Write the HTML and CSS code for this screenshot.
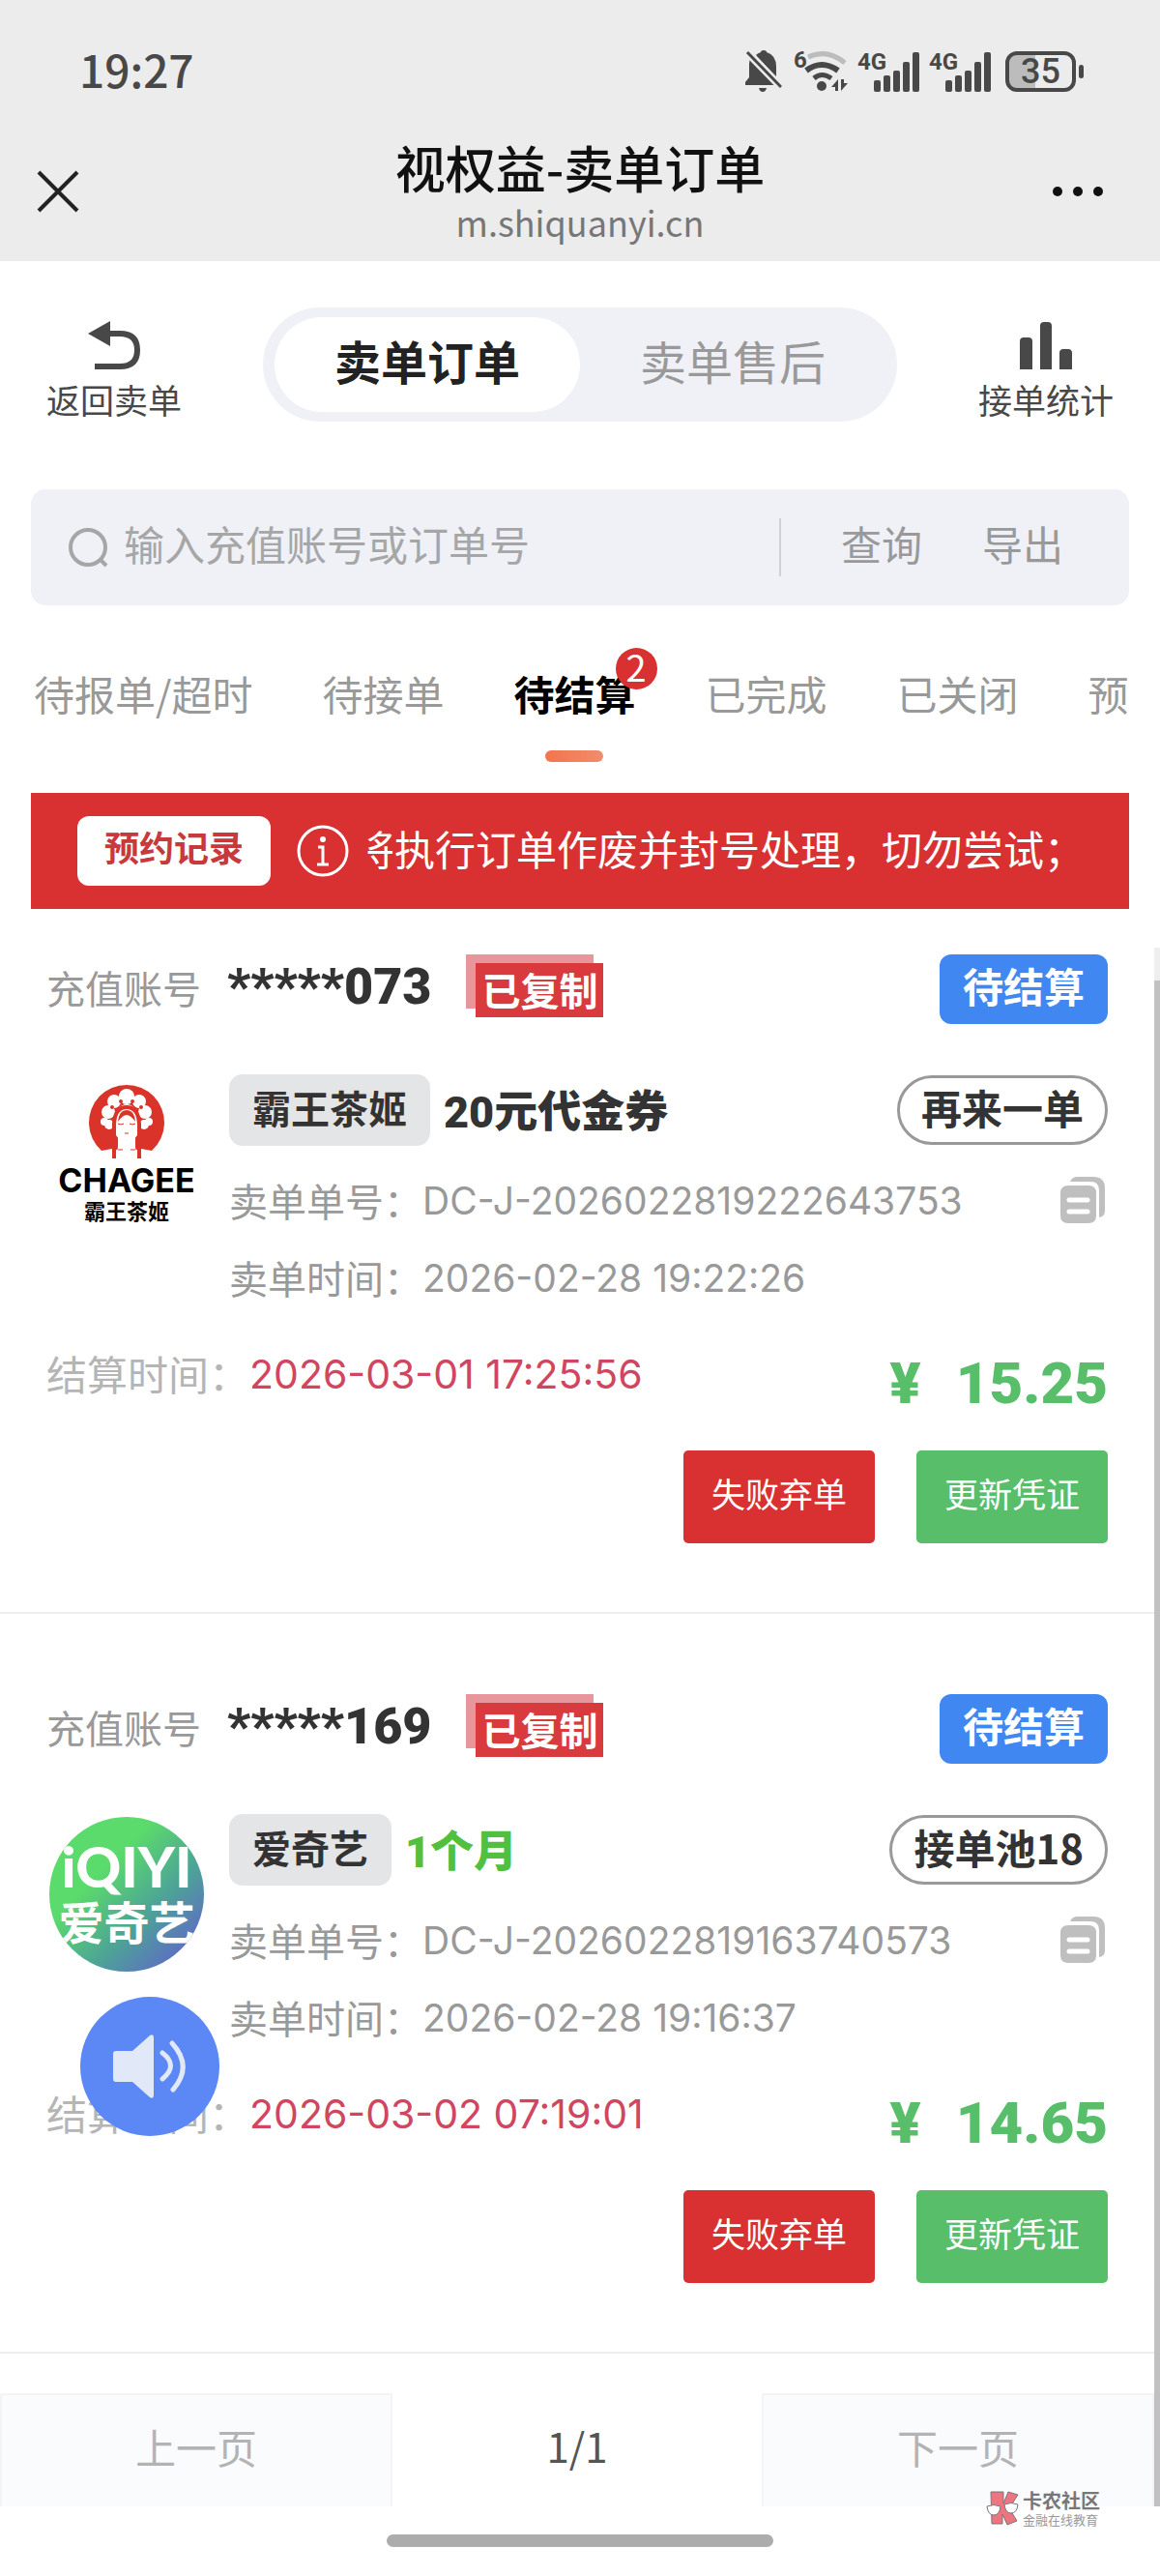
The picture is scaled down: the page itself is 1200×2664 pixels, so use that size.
FILE: index.html
```html
<!DOCTYPE html>
<html lang="zh-CN">

<head>
  <meta charset="UTF-8" />
  <meta name="viewport" content="width=device-width, initial-scale=1.0" />
  <title>视权益-卖单订单</title>
  <link rel="stylesheet" href="styles.css">
</head>

<body>
  <!-- 公用图标 -->
  <svg width="0" height="0" class="symbols" aria-hidden="true">
    <symbol id="icon-signal" viewBox="0 0 62 42">
      <g fill="#484848">
        <rect x="15" y="30" width="7" height="12" rx="2" />
        <rect x="25" y="25" width="7" height="17" rx="2" />
        <rect x="35" y="20" width="7" height="22" rx="2" />
        <rect x="45" y="11" width="7" height="31" rx="2" />
        <rect x="55" y="1" width="7" height="41" rx="2" />
      </g>
    </symbol>
    <symbol id="icon-copy" viewBox="0 0 46 48">
      <path d="M10 5Q12 0 18 0h16q12 0 12 12v23q0 6-6 7V14q0-9-9-9z" fill="#bfbfbf" />
      <path d="M8 9h21q8 0 8 8v23q0 8-8 8H8q-8 0-8-8V17q0-8 8-8z" fill="#bfbfbf" />
      <path d="M9 24h19M9 36h19" stroke="#fff" stroke-width="5" stroke-linecap="round" />
    </symbol>
  </svg>

  <!-- 顶部 -->
  <header class="header">
    <div class="statusbar">
      <span class="clock">19:27</span>
      <div class="status-icons">
        <svg width="38" height="44" viewBox="0 0 38 44">
          <path d="M0 36v-3l4-5V14q0-4 2-7l27 29zM11 5q2-2 5-3 0-2 3-2t3 2q10 3 10 15v11z" fill="#484848" />
          <path d="M14 39h8q-1 4-4 4t-4-4z" fill="#484848" />
          <path d="M2 2l35 36" stroke="#ececec" stroke-width="8" />
          <path d="M2 2l35 36" stroke="#484848" stroke-width="3" />
        </svg>
        <svg class="wifi" width="56" height="46" viewBox="0 0 56 46">
          <text x="0" y="19" class="net-label">6</text>
          <path d="M15 8q20-9 38 6" fill="none" stroke="#bcbcbc" stroke-width="5" />
          <path d="M13 22q16-12 33 0" fill="none" stroke="#484848" stroke-width="6" />
          <path d="M21 30q8-7 18 0" fill="none" stroke="#484848" stroke-width="5" />
          <circle cx="29" cy="38" r="5" fill="#484848" />
          <path d="M46 31v12h-3v-4h-4zM49 43V31h3v4h4z" fill="#484848" />
        </svg>
        <div class="signal">
          <span class="net-label">4G</span>
          <svg width="62" height="42"><use href="#icon-signal" /></svg>
        </div>
        <div class="signal">
          <span class="net-label">4G</span>
          <svg width="62" height="42"><use href="#icon-signal" /></svg>
        </div>
        <div class="battery">35</div>
      </div>
    </div>
    <div class="titlebar">
      <button class="icon-btn" aria-label="关闭">
        <svg width="44" height="44" viewBox="0 0 44 44">
          <path d="M2 2l40 40M42 2L2 42" stroke="#222" stroke-width="4" />
        </svg>
      </button>
      <div class="titles">
        <h1>视权益-卖单订单</h1>
        <p>m.shiquanyi.cn</p>
      </div>
      <button class="icon-btn more" aria-label="更多">
        <svg width="54" height="12" viewBox="0 0 54 12" fill="#111">
          <circle cx="6" cy="6" r="5" />
          <circle cx="27" cy="6" r="5" />
          <circle cx="48" cy="6" r="5" />
        </svg>
      </button>
    </div>
  </header>

  <main>
    <!-- 导航 -->
    <nav class="nav">
      <a class="nav-item" href="#">
        <svg width="54" height="50" viewBox="0 0 54 50">
          <path d="M0 13L23 0v26z" fill="#484848" />
          <path d="M20 13h13q18 0 18 17t-18 17H7" fill="none" stroke="#484848" stroke-width="6" />
        </svg>
        <span>返回卖单</span>
      </a>
      <div class="switch">
        <button class="switch-btn active">卖单订单</button>
        <button class="switch-btn">卖单售后</button>
      </div>
      <a class="nav-item" href="#">
        <svg width="54" height="50" viewBox="0 0 54 50" fill="#484848">
          <path d="M0 50V21q0-4 4-4h5q4 0 4 4v29zM21 50V5q0-4 4-4h4q4 0 4 4v45zM41 50V33q0-4 4-4h5q4 0 4 4v17z" />
        </svg>
        <span>接单统计</span>
      </a>
    </nav>

    <!-- 搜索 -->
    <form class="search">
      <svg width="42" height="42" viewBox="0 0 42 42" fill="none" stroke="#a6a6a6" stroke-width="4">
        <circle cx="21" cy="21" r="18" />
        <path d="M33 33l7 7" stroke-width="4" />
      </svg>
      <input type="text" placeholder="输入充值账号或订单号" aria-label="输入充值账号或订单号" />
      <button type="button">查询</button>
      <button type="button">导出</button>
    </form>

    <!-- 状态选项卡 -->
    <div class="tabs">
      <button class="tab">待报单/超时</button>
      <button class="tab">待接单</button>
      <button class="tab active">待结算<span class="badge">2</span></button>
      <button class="tab">已完成</button>
      <button class="tab">已关闭</button>
      <button class="tab">预</button>
    </div>

    <!-- 公告 -->
    <div class="notice">
      <button class="record">预约记录</button>
      <svg width="54" height="54" viewBox="0 0 54 54" fill="none" stroke="#fff" stroke-width="3">
        <circle cx="27" cy="27" r="25" />
        <path d="M22 23h5v18M21 41h12" />
        <circle cx="27" cy="15" r="2" fill="#fff" stroke-width="2" />
      </svg>
      <div class="marquee"><span>将执行订单作废并封号处理，切勿尝试；</span></div>
    </div>

    <!-- 订单列表 -->
    <div class="scroll">
      <div class="list">
        <article class="order">
          <div class="order-head">
            <span class="label">充值账号</span>
            <strong class="account">*****073</strong>
            <span class="stamp"><span>已复制</span></span>
            <span class="state">待结算</span>
          </div>
          <div class="order-body">
            <svg class="logo" width="160" height="160" viewBox="0 0 160 160">
              <path d="M54 76A39 39 0 1 1 106 76L95 74V85H91L89 72V50H71V72L69 85H65V74z" fill="#d9332a" />
              <g fill="#fff">
                <path d="M69 48q0-20 11-20t11 20v12l-6 8v6l17 3v9H58v-9l17-3v-6l-6-8z" />
                <circle cx="80" cy="20" r="8" />
                <circle cx="67" cy="25" r="7" />
                <circle cx="93" cy="25" r="7" />
                <circle cx="61" cy="36" r="7" />
                <circle cx="99" cy="36" r="7" />
                <circle cx="57" cy="46" r="4" />
                <circle cx="103" cy="46" r="4" />
                <circle cx="62" cy="49" r="5" />
                <circle cx="98" cy="49" r="5" />
              </g>
              <path d="M67 84V48q1-17 13-17t13 17v36" fill="none" stroke="#d9332a" stroke-width="4" />
              <path d="M71 46q1-12 9-12t9 12q-5-7-9-7t-9 7z" fill="#d9332a" />
              <g fill="#d9332a">
                <circle cx="65" cy="31" r="2" />
                <circle cx="74" cy="25" r="2" />
                <circle cx="86" cy="25" r="2" />
                <circle cx="95" cy="31" r="2" />
              </g>
              <path d="M71 48q3 2 6 0M83 48q3 2 6 0M78 58h4M71 75h5M84 75h5" fill="none" stroke="#d9332a" stroke-width="1" />
              <text x="80" y="119" class="chagee-en">CHAGEE</text>
              <text x="80" y="147" class="chagee-cn">霸王茶姬</text>
            </svg>
            <div class="detail">
              <div class="goods">
                <span class="brand">霸王茶姬</span>
                <strong class="product">20元代金券</strong>
                <button class="again">再来一单</button>
              </div>
              <div class="line">
                <span>卖单单号：</span>
                <span class="num">DC-J-2026022819222643753</span>
                <button class="copy" aria-label="复制"><svg width="46" height="48"><use href="#icon-copy" /></svg></button>
              </div>
              <div class="line">
                <span>卖单时间：</span>
                <span class="num">2026-02-28 19:22:26</span>
              </div>
            </div>
          </div>
          <div class="settle">
            <span class="settle-label">结算时间：</span>
            <span class="settle-time">2026-03-01 17:25:56</span>
            <strong class="price"><span>¥</span>15.25</strong>
          </div>
          <div class="actions">
            <button class="btn btn-red">失败弃单</button>
            <button class="btn btn-green">更新凭证</button>
          </div>
        </article>

        <article class="order">
          <div class="order-head">
            <span class="label">充值账号</span>
            <strong class="account">*****169</strong>
            <span class="stamp"><span>已复制</span></span>
            <span class="state">待结算</span>
          </div>
          <div class="order-body">
            <svg class="logo" width="160" height="160" viewBox="0 0 160 160">
              <defs>
                <linearGradient id="iqiyi" x1="0.1" y1="0.1" x2="0.9" y2="0.9">
                  <stop offset="0.3" stop-color="#5bdb6b" />
                  <stop offset="0.65" stop-color="#4da595" />
                  <stop offset="1" stop-color="#5f68c8" />
                </linearGradient>
                <clipPath id="round"><circle cx="80" cy="80" r="80" /></clipPath>
              </defs>
              <g clip-path="url(#round)">
                <rect width="160" height="160" fill="url(#iqiyi)" />
                <text x="80" y="73" class="iqiyi-en">iQIYI</text>
                <text x="80" y="127" class="iqiyi-cn">爱奇艺</text>
              </g>
            </svg>
            <div class="detail">
              <div class="goods">
                <span class="brand">爱奇艺</span>
                <strong class="product green">1个月</strong>
                <button class="again">接单池18</button>
              </div>
              <div class="line">
                <span>卖单单号：</span>
                <span class="num">DC-J-2026022819163740573</span>
                <button class="copy" aria-label="复制"><svg width="46" height="48"><use href="#icon-copy" /></svg></button>
              </div>
              <div class="line">
                <span>卖单时间：</span>
                <span class="num">2026-02-28 19:16:37</span>
              </div>
            </div>
          </div>
          <div class="settle">
            <span class="settle-label">结算时间：</span>
            <span class="settle-time">2026-03-02 07:19:01</span>
            <strong class="price"><span>¥</span>14.65</strong>
          </div>
          <div class="actions">
            <button class="btn btn-red">失败弃单</button>
            <button class="btn btn-green">更新凭证</button>
          </div>
        </article>

        <div class="pager">
          <button disabled>上一页</button>
          <span>1/1</span>
          <button disabled>下一页</button>
        </div>
      </div>
      <div class="scrollbar"></div>
    </div>
  </main>

  <footer class="home"><div class="home-bar"></div></footer>

  <!-- 语音播报 -->
  <button class="voice" aria-label="语音播报">
    <svg width="76" height="66" viewBox="0 0 76 66">
      <path d="M3 17h17L38 1q4-2 4 2v60q0 4-4 2L20 49H3q-3 0-3-3V20q0-3 3-3z" fill="#e1e8f8" />
      <path d="M51 19q17 13 0 27M61 9q22 24 1 48" fill="none" stroke="#e1e8f8" stroke-width="5" stroke-linecap="round" />
    </svg>
  </button>

  <!-- 水印 -->
  <div class="watermark">
    <svg width="34" height="36" viewBox="0 0 34 36">
      <path d="M5 1h13v12l5-12 10 3-9 14 8 13-10 4-5-11v10H6z" fill="#ee7480" stroke="#777" />
      <path d="M1 16q7-3 14 0-1 9-7 9t-7-9zM19 14q7-3 14 0-1 9-7 9t-7-9z" fill="#fff" stroke="#777" />
    </svg>
    <div>
      <p class="wm-name">卡农社区</p>
      <p class="wm-sub">金融在线教育</p>
    </div>
  </div>
</body>

</html>
```
FILE: styles.css
```css
* {
  margin: 0;
  padding: 0;
  box-sizing: border-box;
}

body {
  position: relative;
  background: #fff;
  color: #333;
  font-family: "Noto Sans CJK SC", "Noto Sans", sans-serif;
  font-size: 42px;
}

button {
  padding-bottom: 10px;
  border: none;
  background: none;
  font: inherit;
  color: inherit;
  white-space: nowrap;
  cursor: pointer;
}

a {
  color: inherit;
  text-decoration: none;
}

svg {
  display: block;
  flex: none;
}

.symbols {
  position: absolute;
}

/* 顶部 */
.header {
  height: 270px;
  background: #ececec;
}

.statusbar {
  display: flex;
  justify-content: space-between;
  align-items: center;
  height: 148px;
  padding: 0 78px 0 82px;
}

.clock {
  padding-bottom: 6px;
  color: #484848;
  font-size: 46px;
  font-weight: 500;
}

.status-icons {
  display: flex;
  align-items: center;
  gap: 12px;
}

.net-label {
  color: #484848;
  fill: #484848;
  font-family: Roboto, sans-serif;
  font-size: 24px;
  font-weight: 700;
}

.signal {
  position: relative;
}

.signal .net-label {
  position: absolute;
  top: -4px;
  left: -2px;
  line-height: 30px;
}

.battery {
  position: relative;
  width: 73px;
  height: 42px;
  margin-left: 3px;
  margin-right: 9px;
  border: 4px solid #484848;
  border-radius: 12px;
  background: linear-gradient(90deg, #bcbcbc 42%, transparent 42%);
  color: #484848;
  font-family: Roboto, sans-serif;
  font-size: 36px;
  font-weight: 500;
  line-height: 34px;
  text-align: center;
}

.battery::after {
  content: "";
  position: absolute;
  top: 10px;
  right: -12px;
  width: 5px;
  height: 14px;
  border-radius: 3px;
  background: #484848;
}

.titlebar {
  display: flex;
  justify-content: space-between;
  padding: 0 58px 0 38px;
}

.icon-btn {
  display: flex;
  align-items: center;
  width: 74px;
  height: 100px;
  padding: 0;
}

.icon-btn.more {
  width: 54px;
}

.titles {
  text-align: center;
}

.titles h1 {
  color: #111;
  font-size: 52px;
  font-weight: 500;
  line-height: 50px;
}

.titles p {
  color: #777;
  font-size: 36px;
  line-height: 62px;
}

/* 导航 */
.nav {
  display: flex;
  justify-content: space-between;
  align-items: center;
  gap: 84px;
  padding: 48px 48px 0;
}

.nav-item {
  display: flex;
  flex-direction: column;
  align-items: center;
  gap: 8px;
  width: 140px;
  padding-top: 14px;
  color: #484848;
  font-size: 35px;
  line-height: 46px;
}

.switch {
  display: flex;
  flex: 1;
  height: 118px;
  padding: 10px 12px;
  border-radius: 59px;
  background: #f0f1f7;
}

.switch-btn {
  flex: 1;
  border-radius: 50px;
  color: #999;
  font-size: 48px;
}

.switch-btn.active {
  background: #fff;
  color: #222;
  font-weight: 700;
}

/* 搜索 */
.search {
  display: flex;
  align-items: center;
  height: 120px;
  margin: 70px 32px 0;
  padding: 0 68px 0 38px;
  border-radius: 15px;
  background: #f0f1f7;
}

.search input {
  flex: 1;
  min-width: 0;
  height: 60px;
  padding-left: 16px;
  padding-bottom: 10px;
  border: none;
  border-right: 2px solid #d0d1d6;
  outline: none;
  background: none;
  font: inherit;
}

.search input::placeholder {
  color: #a6a6a6;
}

.search button {
  margin-left: 62px;
  color: #999;
}

/* 状态选项卡 */
.tabs {
  display: flex;
  gap: 72px;
  height: 194px;
  margin: 0 32px;
  padding-left: 3px;
  overflow: hidden;
}

.tab {
  position: relative;
  flex: none;
  height: 162px;
  padding: 40px 0 22px;
  color: #999;
}

.tab.active {
  color: #000;
  font-weight: 700;
}

.tab.active::after {
  content: "";
  position: absolute;
  left: 50%;
  bottom: 0;
  width: 60px;
  height: 12px;
  margin-left: -30px;
  border-radius: 6px;
  background: linear-gradient(90deg, #f2754d, #f08c6c);
}

.badge {
  position: absolute;
  top: 44px;
  right: -22px;
  width: 43px;
  height: 43px;
  border-radius: 50%;
  background: #d93131;
  color: #fff;
  font-size: 38px;
  font-weight: 400;
  line-height: 38px;
}

/* 公告 */
.notice {
  display: flex;
  align-items: center;
  height: 120px;
  margin: 0 32px;
  padding: 0 46px 0 48px;
  background: #d93131;
  color: #fff;
}

.record {
  width: 200px;
  height: 72px;
  margin-right: 27px;
  border-radius: 12px;
  background: #fff;
  color: #c8393c;
  font-size: 36px;
  font-weight: 700;
}

.marquee {
  display: flex;
  flex: 1;
  justify-content: flex-end;
  margin-left: 19px;
  padding-bottom: 8px;
  overflow: hidden;
  white-space: nowrap;
}

/* 订单列表 */
.scroll {
  display: flex;
  margin-top: 40px;
}

.list {
  flex: 1;
}

.scrollbar {
  width: 6px;
  border-top: 34px solid #eee;
  background: #c1c1c1;
}

.order {
  padding: 83px 48px 71px;
  border-bottom: 2px solid #eee;
}

.order:first-child {
  padding-top: 7px;
}

.order-head {
  display: flex;
  align-items: center;
  height: 72px;
}

.label {
  width: 187px;
  padding-bottom: 4px;
  color: #999;
  font-size: 40px;
}

.account {
  padding-bottom: 6px;
  font-family: Roboto, sans-serif;
  font-size: 52px;
  font-weight: 900;
}

.stamp {
  position: relative;
  width: 132px;
  height: 56px;
  margin-left: 36px;
  margin-bottom: 16px;
  background: #e9959c;
}

.stamp span {
  position: absolute;
  top: 9px;
  left: 10px;
  width: 132px;
  height: 56px;
  background: #d93a3e;
  color: #fff;
  font-size: 40px;
  font-weight: 700;
  line-height: 54px;
  text-align: center;
}

.state {
  width: 174px;
  height: 72px;
  margin-left: auto;
  border-radius: 12px;
  background: #4187f2;
  color: #fff;
  font-weight: 700;
  line-height: 64px;
  text-align: center;
}

.order-body {
  display: flex;
  margin-top: 52px;
}

.logo {
  margin: 3px 26px 0 3px;
}

.chagee-en {
  font-family: Inter, sans-serif;
  font-size: 34px;
  font-weight: 700;
  text-anchor: middle;
}

.chagee-cn {
  font-size: 22px;
  font-weight: 700;
  text-anchor: middle;
}

.iqiyi-en {
  fill: #fff;
  font-family: Lato, sans-serif;
  font-size: 58px;
  font-weight: 900;
  text-anchor: middle;
}

.iqiyi-cn {
  fill: #fff;
  font-size: 47px;
  font-weight: 700;
  text-anchor: middle;
}

.detail {
  flex: 1;
}

.goods {
  display: flex;
  align-items: center;
  height: 74px;
  margin-bottom: 16px;
}

.brand {
  height: 74px;
  padding: 0 24px;
  border-radius: 14px;
  background: #e4e5e7;
  font-size: 40px;
  font-weight: 700;
  line-height: 68px;
}

.product {
  margin-left: 14px;
  padding-bottom: 4px;
  font-family: Roboto, "Noto Sans CJK SC", sans-serif;
  font-size: 45px;
  font-weight: 900;
}

.green {
  color: #52c03f;
}

.again {
  height: 72px;
  margin-left: auto;
  padding: 0 22px 6px;
  border: 3px solid #999;
  border-radius: 36px;
  font-weight: 700;
  line-height: 60px;
}

.line {
  display: flex;
  align-items: center;
  height: 80px;
  color: #999;
  font-size: 40px;
}

.num {
  font-family: Inter, sans-serif;
  font-size: 39px;
}

.copy {
  margin-left: auto;
  margin-right: 3px;
  padding: 0;
}

.settle {
  display: flex;
  height: 139px;
  padding-top: 32px;
}

.settle-label {
  color: #b5b5b5;
  line-height: 54px;
}

.settle-time {
  color: #d04560;
  font-family: Inter, sans-serif;
  font-size: 41px;
  line-height: 56px;
}

.price {
  margin-left: auto;
  color: #58be6a;
  font-family: Roboto, sans-serif;
  font-size: 60px;
  font-weight: 900;
  line-height: 76px;
}

.price span {
  margin-right: 36px;
}

.actions {
  display: flex;
  justify-content: flex-end;
  gap: 43px;
}

.btn {
  width: 198px;
  height: 96px;
  border-radius: 5px;
  color: #fff;
  font-size: 35px;
}

.btn-red {
  background: #d93131;
}

.btn-green {
  background: #58be6a;
}

/* 分页 */
.pager {
  display: flex;
  justify-content: space-between;
  align-items: center;
  height: 117px;
  margin-top: 41px;
  color: #555;
}

.pager span {
  padding-bottom: 10px;
}

.pager button {
  width: 34%;
  height: 117px;
  border: 2px solid #f4f4f6;
  border-bottom: none;
  background: #fafbfd;
  color: #b3b3b3;
}

.home {
  height: 72px;
  padding-top: 29px;
}

.home-bar {
  width: 400px;
  height: 13px;
  margin: 0 auto;
  border-radius: 7px;
  background: #acacac;
}

.voice {
  display: flex;
  align-items: center;
  justify-content: center;
  position: absolute;
  left: 83px;
  bottom: 455px;
  width: 144px;
  height: 144px;
  padding: 0;
  border-radius: 50%;
  background: #5b88f5;
}

.watermark {
  display: flex;
  gap: 4px;
  position: absolute;
  right: 62px;
  bottom: 48px;
}

.wm-name {
  color: #777;
  font-size: 20px;
  font-weight: 700;
  line-height: 20px;
}

.wm-sub {
  color: #999;
  font-size: 13px;
  line-height: 20px;
}
```
